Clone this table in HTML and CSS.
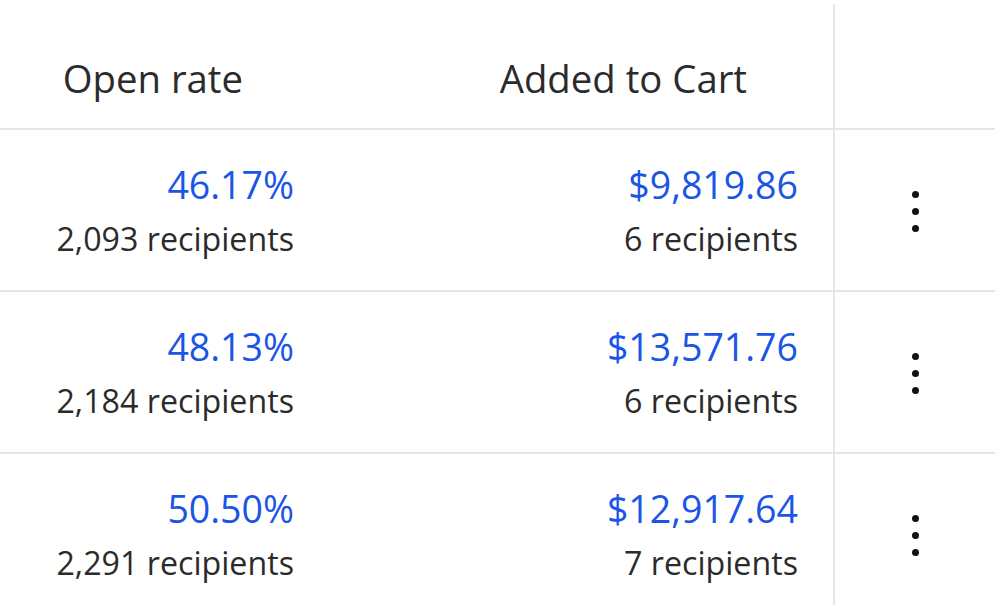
FILE: index.html
```html
<!DOCTYPE html>
<html>
<head>
<meta charset="utf-8">
<link rel="stylesheet" href="styles.css">
</head>
<body>
<div class="table">
  <div class="row head">
    <div class="cell num"><span class="th">Open rate</span></div>
    <div class="cell num wide"><span class="th">Added to Cart</span></div>
    <div class="cell act"></div>
  </div>
  <div class="row">
    <div class="cell num"><div class="val">46.17%</div><div class="sub">2,093 recipients</div></div>
    <div class="cell num wide"><div class="val">$9,819.86</div><div class="sub">6 recipients</div></div>
    <div class="cell act"><span class="dots"><i></i><i></i><i></i></span></div>
  </div>
  <div class="row">
    <div class="cell num"><div class="val">48.13%</div><div class="sub">2,184 recipients</div></div>
    <div class="cell num wide"><div class="val">$13,571.76</div><div class="sub">6 recipients</div></div>
    <div class="cell act"><span class="dots"><i></i><i></i><i></i></span></div>
  </div>
  <div class="row last">
    <div class="cell num"><div class="val">50.50%</div><div class="sub">2,291 recipients</div></div>
    <div class="cell num wide"><div class="val">$12,917.64</div><div class="sub">7 recipients</div></div>
    <div class="cell act"><span class="dots"><i></i><i></i><i></i></span></div>
  </div>
</div>
</body>
</html>
```
FILE: styles.css
```css
html, body {
  margin: 0;
  padding: 0;
  background: #ffffff;
}
body {
  font-family: "Open Sans", "Noto Sans", sans-serif;
  color: #2a2a2a;
  width: 995px;
  height: 605px;
  overflow: hidden;
}
.table {
  display: flex;
  flex-direction: column;
}
.row {
  display: flex;
  height: 160px;
  border-bottom: 2px solid #e3e7eb;
}
.row.head {
  height: 128px;
}
.cell {
  display: flex;
  flex-direction: column;
  justify-content: center;
}
.cell.num {
  width: 330px;
  align-items: flex-end;
  padding-right: 36px;
  box-sizing: border-box;
}
.cell.num.wide {
  width: 503px;
  padding-right: 35px;
}
.th {
  font-size: 38.3px;
  margin-right: 51px;
  margin-top: 28px;
  color: #2b2b2b;
}
.val {
  font-size: 37.5px;
  line-height: 54px;
  color: #1a55e6;
}
.sub {
  font-size: 32.2px;
  line-height: 54px;
  color: #2b2b2b;
}
.row:not(.head) .cell.num {
  padding-top: 4px;
}
.cell.act {
  flex: 1;
  align-items: center;
  border-left: 2px solid #e3e7eb;
}
.head .cell.act {
  margin-top: 4px;
}
.dots {
  display: flex;
  flex-direction: column;
  gap: 10px;
  margin-top: 2px;
}
.dots i {
  display: block;
  width: 7px;
  height: 7px;
  border-radius: 50%;
  background: #111;
}
```
